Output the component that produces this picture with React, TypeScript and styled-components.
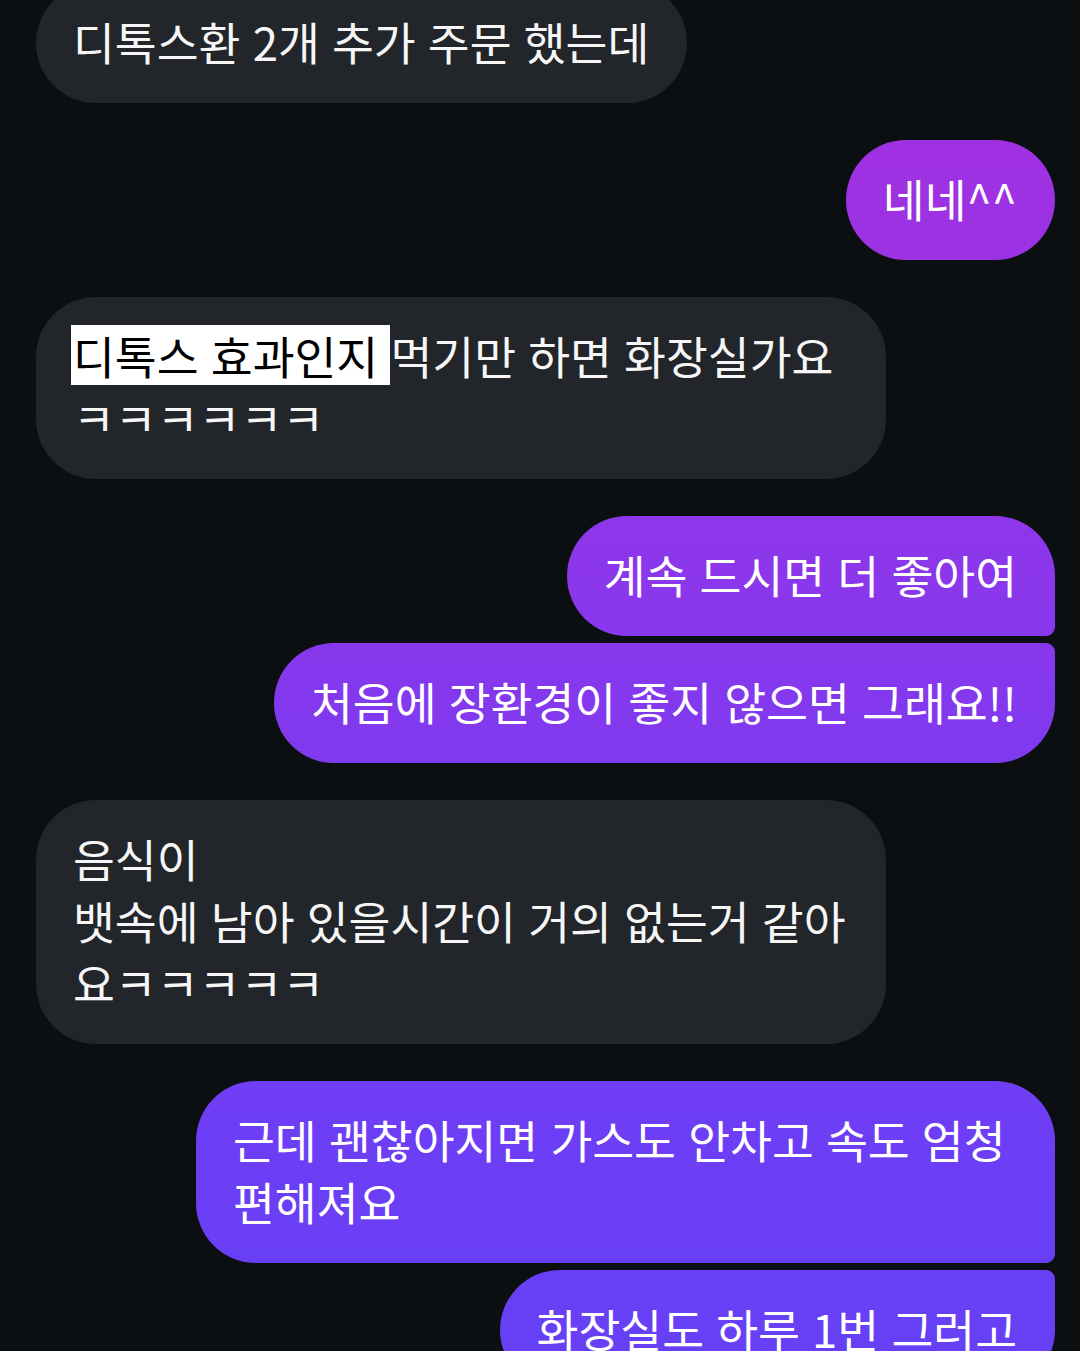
import React from 'react';
import styled, { createGlobalStyle, css } from 'styled-components';

const GlobalStyle = createGlobalStyle`
    html, body {
        margin: 0;
        padding: 0;
        background: #0c0f12;
    }
    body {
        font-family: "Noto Sans CJK KR", "Noto Sans", sans-serif;
        -webkit-font-smoothing: antialiased;
    }
`;

const Thread = styled.div`
    display: flex;
    flex-direction: column;
    gap: 37px;
    margin-top: -17px;
    padding: 0 25px 40px 36px;
`;

const Group = styled.div<{ $me?: boolean }>`
    display: flex;
    flex-direction: column;
    align-items: ${p => (p.$me ? 'flex-end' : 'flex-start')};
    gap: 7px;
`;

type Pos = 'single' | 'first' | 'last';

const Bubble = styled.div<{ $me?: boolean; $pos?: Pos }>`
    box-sizing: border-box;
    padding: 27px 38px 31px 37px;
    font-size: 45.5px;
    line-height: 62px;
    letter-spacing: 0;
    word-spacing: 2px;
    white-space: pre-line;
    border-radius: 60px;
    max-width: ${p => (p.$me ? '859px' : '850px')};
    color: #f6f6f6;
    background: #22252a;

    ${p => p.$me && css`
        color: #ffffff;
        background: linear-gradient(180deg, #a52fe0 0px, #9a33e4 300px, #8a37ec 600px, #7a3bf1 850px, #6c3ef5 1150px, #6740f6 1351px);
        background-attachment: fixed;
    `}

    ${p => p.$me && p.$pos === 'first' && css`
        border-bottom-right-radius: 9px;
    `}

    ${p => p.$me && p.$pos === 'last' && css`
        border-top-right-radius: 9px;
    `}
`;

const Selected = styled.span`
    display: inline-block;
    white-space: pre;
    height: 60px;
    line-height: 60px;
    background: #ffffff;
    color: #000000;
    padding-left: 2px;
    margin-left: -2px;
`;

type Msg = { text: React.ReactNode; pos?: Pos };
type Turn = { me: boolean; msgs: Msg[] };

const turns: Turn[] = [
    { me: false, msgs: [{ text: '디톡스환 2개 추가 주문 했는데' }] },
    { me: true, msgs: [{ text: '네네^^' }] },
    {
        me: false,
        msgs: [{
            text: <><Selected>디톡스 효과인지 </Selected>먹기만 하면 화장실가요 ㅋㅋㅋㅋㅋㅋ</>
        }]
    },
    {
        me: true,
        msgs: [
            { text: '계속 드시면 더 좋아여', pos: 'first' },
            { text: '처음에 장환경이 좋지 않으면 그래요!!', pos: 'last' }
        ]
    },
    { me: false, msgs: [{ text: '음식이\n뱃속에 남아 있을시간이 거의 없는거 같아요ㅋㅋㅋㅋㅋ' }] },
    {
        me: true,
        msgs: [
            { text: '근데 괜찮아지면 가스도 안차고 속도 엄청 편해져요', pos: 'first' },
            { text: '화장실도 하루 1번 그러고', pos: 'last' }
        ]
    }
];

export default function App() {
    return <>
        <GlobalStyle />
        <Thread>
            {turns.map((t, i) => (
                <Group key={i} $me={t.me}>
                    {t.msgs.map((m, j) => (
                        <Bubble key={j} $me={t.me} $pos={m.pos || 'single'}>{m.text}</Bubble>
                    ))}
                </Group>
            ))}
        </Thread>
    </>;
}
